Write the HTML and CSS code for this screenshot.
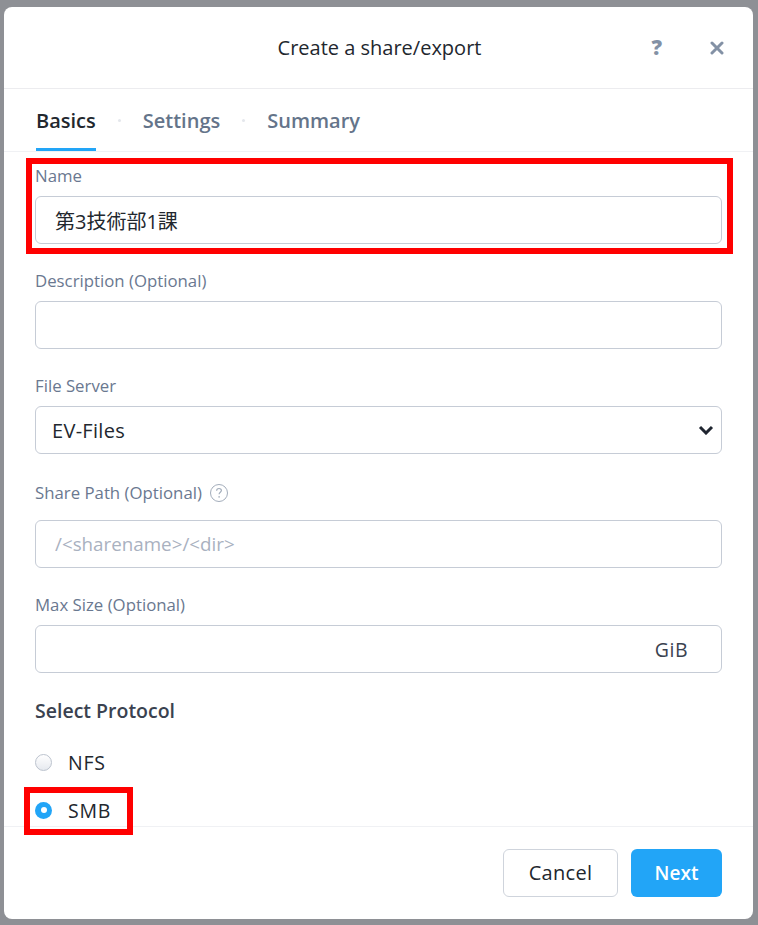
FILE: index.html
```html
<!DOCTYPE html>
<html lang="en">
<head>
<meta charset="utf-8">
<title>Create a share/export</title>
<link rel="stylesheet" href="styles.css">
</head>
<body>
<div class="backdrop">
  <div class="modal">
    <header class="modal-header">
      <div></div>
      <h1 class="title">Create a share/export</h1>
      <div class="header-actions">
        <span class="help-btn">?</span>
        <svg class="close-btn" width="14" height="14" viewBox="0 0 14 14"><path d="M2 2 L12 12 M12 2 L2 12" stroke="#8391a5" stroke-width="3" stroke-linecap="round"/></svg>
      </div>
    </header>
    <nav class="tabs">
      <span class="tab active">Basics</span>
      <span class="dot"></span>
      <span class="tab">Settings</span>
      <span class="dot"></span>
      <span class="tab">Summary</span>
    </nav>
    <div class="modal-body">
      <div class="field">
        <label class="label">Name</label>
        <input class="input name-input" type="text" value="第3技術部1課">
      </div>
      <div class="field">
        <label class="label">Description (Optional)</label>
        <input class="input" type="text" value="">
      </div>
      <div class="field">
        <label class="label">File Server</label>
        <div class="input select">
          <span>EV-Files</span>
          <svg width="16" height="10" viewBox="0 0 16 10"><path d="M2 2 L8 8 L14 2" fill="none" stroke="#1f2530" stroke-width="3"/></svg>
        </div>
      </div>
      <div class="field">
        <label class="label label-icon">Share Path (Optional)
          <svg width="20" height="20" viewBox="0 0 20 20"><circle cx="10" cy="10" r="8.5" fill="none" stroke="#a3adbb" stroke-width="1"/><path d="M7.6 7.8 C7.6 6.3 8.7 5.5 10 5.5 C11.4 5.5 12.4 6.4 12.4 7.6 C12.4 9.2 10.1 9.4 10.1 11.3" fill="none" stroke="#a3adbb" stroke-width="1.2"/><circle cx="10.1" cy="13.9" r="0.8" fill="#a3adbb"/></svg>
        </label>
        <input class="input path-input" type="text" placeholder="/<sharename>/<dir>">
      </div>
      <div class="field">
        <label class="label">Max Size (Optional)</label>
        <div class="input size">
          <span class="unit">GiB</span>
        </div>
      </div>
      <h2 class="section-title">Select Protocol</h2>
      <div class="radios">
        <div class="radio-row"><span class="radio"></span><span class="radio-label">NFS</span></div>
        <div class="radio-row"><span class="radio checked"></span><span class="radio-label">SMB</span></div>
      </div>
    </div>
    <footer class="modal-footer">
      <button class="btn btn-secondary">Cancel</button>
      <button class="btn btn-primary">Next</button>
    </footer>
    <div class="annotation name-box"></div>
    <div class="annotation smb-box"></div>
  </div>
</div>
</body>
</html>
```

FILE: styles.css
```css
* { box-sizing: border-box; }
html, body { margin: 0; height: 925px; overflow: hidden; }
body {
  background: #8e9095;
  font-family: "Open Sans", "Noto Sans CJK JP", sans-serif;
  color: #22272e;
}
.backdrop { padding: 7px 5px 0 4px; }
.modal {
  position: relative;
  width: 749px;
  height: 912px;
  background: #fff;
  border-radius: 8px;
  display: flex;
  flex-direction: column;
  overflow: hidden;
}
.modal-header {
  height: 82px;
  flex: none;
  border-bottom: 1px solid #ececef;
  display: grid;
  grid-template-columns: 1fr auto 1fr;
  align-items: center;
  padding: 0 29px 0 31px;
}
.title {
  margin: 0;
  font-size: 20px;
  font-weight: 400;
  color: #22272e;
}
.header-actions {
  justify-self: end;
  display: flex;
  align-items: center;
  gap: 47px;
}
.help-btn {
  font-size: 21px;
  font-weight: 800;
  color: #8391a5;
  line-height: 1;
  margin-right: 1px;
}
.close-btn { display: block; }
.tabs {
  height: 63px;
  flex: none;
  border-bottom: 1px solid #f0f1f4;
  display: flex;
  align-items: stretch;
  gap: 22px;
  padding-left: 32px;
}
.tab {
  display: flex;
  align-items: center;
  font-size: 20px;
  font-weight: 600;
  color: #64748a;
  position: relative;
}
.tab.active { color: #22272e; }
.tab.active::after {
  content: "";
  position: absolute;
  left: 0; right: 0; bottom: 0;
  height: 3px;
  background: #22a5f7;
}
.dot {
  align-self: center;
  width: 3px;
  height: 3px;
  border-radius: 50%;
  background: #e4e7ec;
}
.modal-body {
  flex: 1;
  padding: 14px 31px 0;
  overflow: hidden;
}
.field { margin-bottom: 27px; }
.label {
  display: block;
  font-size: 16.8px;
  line-height: 20px;
  color: #6a7890;
  margin-bottom: 10px;
}
.label-icon {
  display: flex;
  align-items: center;
  gap: 7px;
  line-height: 24px;
  height: 24px;
  margin-bottom: 15px;
}
.label-icon svg { display: block; }
.input {
  display: flex;
  align-items: center;
  width: 100%;
  height: 48px;
  border: 1px solid #c6ccd6;
  border-radius: 6px;
  background: #fff;
  font-family: "Open Sans", "Noto Sans CJK JP", sans-serif;
  font-size: 20px;
  letter-spacing: 0.3px;
  color: #22272e;
  padding: 0 16px;
  outline: none;
}
.name-input { padding-left: 19px; letter-spacing: 0; }
.path-input { padding-left: 19px; font-size: 18.8px; letter-spacing: 0; }
.path-input::placeholder { color: #a9b1bf; }
.select { justify-content: space-between; padding-right: 7px; }
.size { justify-content: flex-end; padding-right: 33px; }
.unit { font-size: 19.5px; letter-spacing: 0.5px; color: #3a4250; }
.section-title {
  margin: -1px 0 0;
  font-size: 19.5px;
  line-height: 24px;
  font-weight: 600;
  color: #3a4250;
}
.radios {
  margin-top: 27px;
  display: flex;
  flex-direction: column;
  gap: 24px;
}
.radio-row {
  display: flex;
  align-items: center;
  gap: 16px;
  height: 24px;
}
.radio {
  width: 17px;
  height: 17px;
  border-radius: 50%;
  border: 1px solid #bcc3ce;
  background: linear-gradient(#ffffff, #e6e9ef);
  flex: none;
}
.radio.checked {
  border: none;
  background: #22a5f7;
  display: flex;
  align-items: center;
  justify-content: center;
}
.radio.checked::after {
  content: "";
  width: 6px;
  height: 6px;
  border-radius: 50%;
  background: #fff;
}
.radio-label { font-size: 19.5px; letter-spacing: 0.8px; color: #22272e; }
.modal-footer {
  flex: none;
  height: 93px;
  border-top: 1px solid #f0f1f4;
  display: flex;
  align-items: center;
  justify-content: flex-end;
  gap: 13px;
  padding: 0 31px 1px;
}
.btn {
  height: 48px;
  border-radius: 6px;
  font-family: "Open Sans", sans-serif;
  font-size: 20px;
  padding: 0;
  cursor: pointer;
}
.btn-secondary {
  width: 115px;
  background: #fff;
  border: 1px solid #cfd4dc;
  color: #22272e;
  letter-spacing: 0.3px;
}
.btn-primary {
  width: 91px;
  background: #22a5f7;
  border: none;
  color: #fff;
  font-weight: 600;
  font-size: 19px;
}
.annotation {
  position: absolute;
  border: 6px solid #ff0000;
  pointer-events: none;
}
.name-box { left: 22px; top: 151px; width: 707px; height: 96px; }
.smb-box { left: 20px; top: 780px; width: 109px; height: 48px; }
```
